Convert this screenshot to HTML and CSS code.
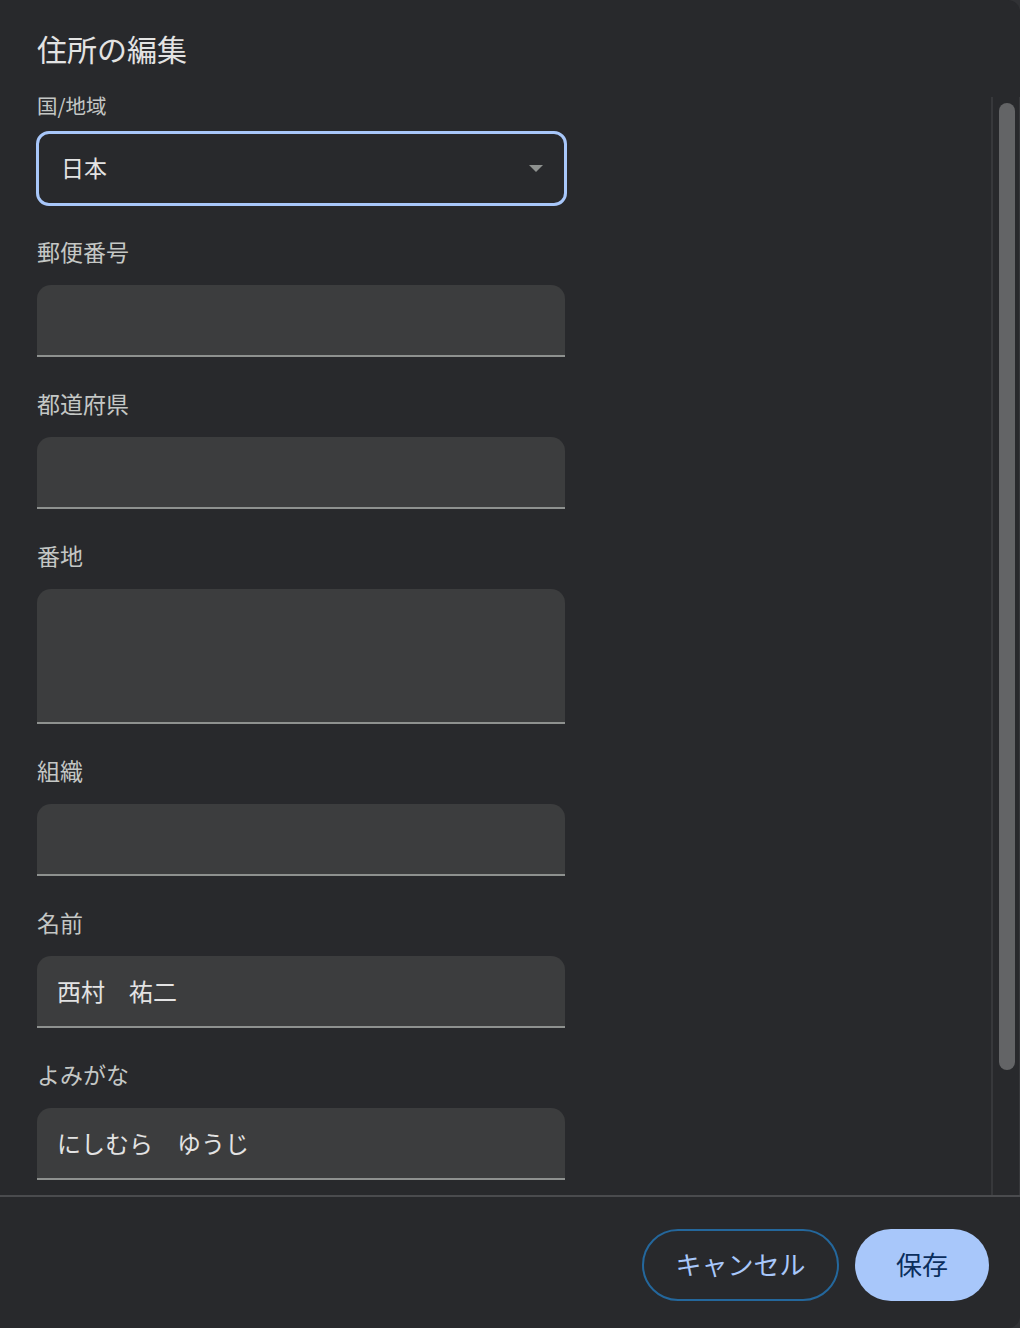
FILE: index.html
```html
<!DOCTYPE html>
<html lang="ja">
<head>
<meta charset="utf-8">
<title>住所の編集</title>
<link rel="stylesheet" href="styles.css">
</head>
<body>
<div class="dialog">
  <div class="header">
    <h1 class="title">住所の編集</h1>
  </div>
  <div class="body">
    <div class="scroll">
      <div class="form">
        <div class="label label-first">国/地域</div>
        <div class="select">
          <span class="select-value">日本</span>
          <span class="caret"></span>
        </div>

        <div class="label label-after-select">郵便番号</div>
        <div class="input"></div>

        <div class="label">都道府県</div>
        <div class="input"></div>

        <div class="label">番地</div>
        <div class="input input-area"></div>

        <div class="label">組織</div>
        <div class="input"></div>

        <div class="label">名前</div>
        <div class="input"><span class="value">西村　祐二</span></div>

        <div class="label">よみがな</div>
        <div class="input"><span class="value">にしむら　ゆうじ</span></div>

        <div class="input input-more"></div>
      </div>
    </div>
    <div class="scrollbar"><div class="thumb"></div></div>
  </div>
  <div class="footer">
    <button class="btn btn-cancel">キャンセル</button>
    <button class="btn btn-save">保存</button>
  </div>
</div>
</body>
</html>
```
FILE: styles.css
```css
* { box-sizing: border-box; }

html, body {
  margin: 0;
  padding: 0;
  background: #313235;
  font-family: "Noto Sans CJK JP", "Noto Sans", sans-serif;
}

.dialog {
  width: 1020px;
  height: 1328px;
  background: #28292c;
  border-radius: 0 12px 12px 0;
  display: flex;
  flex-direction: column;
  overflow: hidden;
}

.header {
  height: 91px;
  flex: none;
  padding: 28px 0 0 37px;
}

.title {
  margin: 0;
  font-size: 30px;
  line-height: 40px;
  font-weight: 400;
  color: #e3e3e3;
}

.body {
  height: 1104px;
  flex: none;
  display: flex;
}

.scroll {
  flex: 1;
  overflow: hidden;
  padding-top: 4px;
}

.form {
  padding-left: 37px;
  width: 565px;
  display: flex;
  flex-direction: column;
}

.label {
  font-size: 23px;
  line-height: 24px;
  color: #c4c7c5;
  margin-top: 34px;
}

.label-first {
  margin-top: 0;
  font-size: 20.5px;
  line-height: 20px;
}

.label-after-select {
  margin-top: 33px;
}

.select {
  margin-top: 16px;
  margin-left: -1px;
  width: 531px;
  height: 75px;
  border: 3px solid #a8c7fa;
  border-radius: 13px;
  display: flex;
  align-items: center;
  padding: 0 21px 3px 22px;
}

.select-value {
  font-size: 23px;
  color: #e3e3e3;
}

.caret {
  margin-left: auto;
  margin-top: 3px;
  width: 0;
  height: 0;
  border-left: 7px solid transparent;
  border-right: 7px solid transparent;
  border-top: 7px solid #8e918f;
}

.input {
  margin-top: 22px;
  width: 528px;
  height: 72px;
  background: #3c3d3e;
  border-bottom: 2px solid #8e918f;
  border-radius: 14px 14px 0 0;
  display: flex;
  align-items: center;
  padding: 0 20px 0 20px;
  flex: none;
}

.input-area {
  height: 135px;
}

.input-more {
  margin-top: 80px;
}

.value {
  font-size: 24px;
  color: #e3e3e3;
  line-height: 30px;
}

.scrollbar {
  flex: none;
  width: 29px;
  margin-top: 6px;
  border-left: 2px solid #37383b;
  border-right: 1px solid #37383b;
  padding: 6px 4px 0 6px;
}

.thumb {
  width: 16px;
  height: 967px;
  background: #636466;
  border-radius: 8px;
}

.footer {
  flex: 1;
  border-top: 2px solid #4a4b4e;
  display: flex;
  justify-content: flex-end;
  align-items: flex-start;
  gap: 16px;
  padding: 32px 31px 0 0;
}

.btn {
  height: 72px;
  border-radius: 36px;
  font-family: "Noto Sans CJK JP", "Noto Sans", sans-serif;
  font-size: 26px;
  line-height: 30px;
  padding: 0 0 2px 0;
  cursor: pointer;
}

.btn-cancel {
  width: 197px;
  background: transparent;
  border: 2px solid #24679c;
  color: #a8c7fa;
}

.btn-save {
  width: 134px;
  background: #a8c7fa;
  border: none;
  color: #0b2e5c;
}
```
